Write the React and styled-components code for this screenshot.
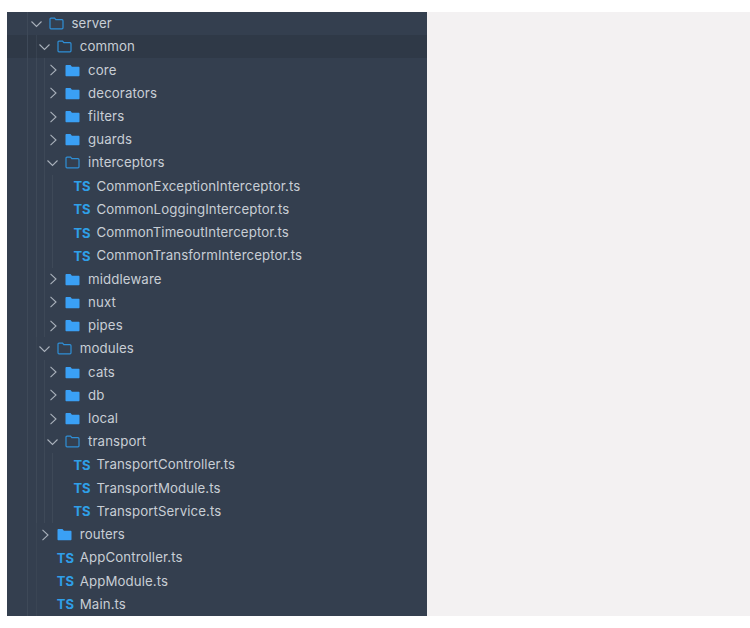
import React from 'react';
import styled, { createGlobalStyle } from 'styled-components';

const tree = [
  { name: 'server', depth: 0, type: 'open' },
  { name: 'common', depth: 1, type: 'open', active: true },
  { name: 'core', depth: 2, type: 'closed' },
  { name: 'decorators', depth: 2, type: 'closed' },
  { name: 'filters', depth: 2, type: 'closed' },
  { name: 'guards', depth: 2, type: 'closed' },
  { name: 'interceptors', depth: 2, type: 'open' },
  { name: 'CommonExceptionInterceptor.ts', depth: 3, type: 'file' },
  { name: 'CommonLoggingInterceptor.ts', depth: 3, type: 'file' },
  { name: 'CommonTimeoutInterceptor.ts', depth: 3, type: 'file' },
  { name: 'CommonTransformInterceptor.ts', depth: 3, type: 'file' },
  { name: 'middleware', depth: 2, type: 'closed' },
  { name: 'nuxt', depth: 2, type: 'closed' },
  { name: 'pipes', depth: 2, type: 'closed' },
  { name: 'modules', depth: 1, type: 'open' },
  { name: 'cats', depth: 2, type: 'closed' },
  { name: 'db', depth: 2, type: 'closed' },
  { name: 'local', depth: 2, type: 'closed' },
  { name: 'transport', depth: 2, type: 'open' },
  { name: 'TransportController.ts', depth: 3, type: 'file' },
  { name: 'TransportModule.ts', depth: 3, type: 'file' },
  { name: 'TransportService.ts', depth: 3, type: 'file' },
  { name: 'routers', depth: 1, type: 'closed' },
  { name: 'AppController.ts', depth: 1, type: 'file' },
  { name: 'AppModule.ts', depth: 1, type: 'file' },
  { name: 'Main.ts', depth: 1, type: 'file' },
];

const GlobalStyle = createGlobalStyle`
  html, body {
    margin: 0;
    background: #fff;
  }
`;

const Page = styled.div`
  display: flex;
  width: 750px;
  height: 628px;
  padding: 12px 0 12px 7px;
  box-sizing: border-box;
`;

const Sidebar = styled.div`
  width: 420px;
  background: #343f4f;
  display: grid;
  grid-auto-rows: 1fr;
`;

const Blank = styled.div`
  flex: 1;
  background: #f3f1f2;
`;

// indent guides are a repeating 1px stripe, one per depth level
const Row = styled.div`
  display: flex;
  align-items: center;
  padding-left: ${(p) => 22.5 + p.$depth * 8.3}px;
  padding-bottom: 1px;
  background-color: ${(p) => (p.$active ? '#2f3947' : 'transparent')};
  background-image: repeating-linear-gradient(
    90deg,
    transparent 0 7.3px,
    #3e4958 7.3px 8.3px
  );
  background-position: 12.7px 0;
  background-size: ${(p) => (p.$depth + 1) * 8.3}px 100%;
  background-repeat: no-repeat;
  font-family: Inter, 'Noto Sans', sans-serif;
  font-size: 13.25px;
  letter-spacing: 0.1px;
  color: #c8ced5;
`;

const Arrow = styled.svg`
  width: 18px;
  height: 12px;
  flex: none;
  margin-top: 1px;
  fill: none;
  stroke: #a9b1bb;
  stroke-width: 1.1;
`;

const FolderIcon = styled.svg`
  width: 15px;
  height: 13px;
  margin-left: 1px;
  margin-right: 8px;
  margin-top: 1px;
  flex: none;
`;

const TsBadge = styled.span`
  width: 17px;
  margin-left: 19px;
  margin-right: 6px;
  margin-top: 1px;
  flex: none;
  font-weight: 700;
  font-size: 13px;
  letter-spacing: 0;
  color: #2f9fe8;
`;

function Chevron({ open }) {
  return (
    <Arrow viewBox="0 0 18 12">
      {open ? <path d="M1.5 3.5l5 5 5-5" /> : <path d="M4.5 .8l5.5 5.2-5.5 5.2" />}
    </Arrow>
  );
}

function Folder({ open }) {
  return (
    <FolderIcon viewBox="0 0 15 13">
      {open ? (
        <path d="M1 2.2c0-.6.4-1 1-1h3.6l1.2 1.5H13c.6 0 1 .4 1 1v7.1c0 .6-.4 1-1 1H2c-.6 0-1-.4-1-1z" fill="none" stroke="#2f8fd6" strokeWidth="1.2" />
      ) : (
        <path d="M0.5 2c0-.6.4-1 1-1h4l1.4 1.7h6.6c.6 0 1 .4 1 1v7.6c0 .6-.4 1-1 1h-12c-.6 0-1-.4-1-1z" fill="#3aa0f5" />
      )}
    </FolderIcon>
  );
}

export default function App() {
  return (
    <Page>
      <GlobalStyle />
      <Sidebar>
        {tree.map((item) => (
          <Row key={item.name} $depth={item.depth} $active={item.active}>
            {item.type === 'file' ? (
              <TsBadge>TS</TsBadge>
            ) : (
              <>
                <Chevron open={item.type === 'open'} />
                <Folder open={item.type === 'open'} />
              </>
            )}
            {item.name}
          </Row>
        ))}
      </Sidebar>
      <Blank />
    </Page>
  );
}
